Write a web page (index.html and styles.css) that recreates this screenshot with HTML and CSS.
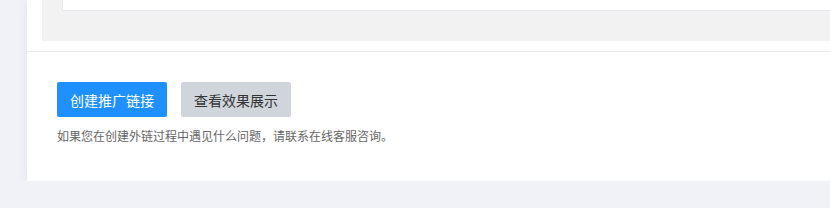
FILE: index.html
```html
<!DOCTYPE html>
<html lang="zh-CN">
  <head>
    <meta charset="UTF-8" />
    <meta name="viewport" content="width=device-width, initial-scale=1.0" />
    <title>创建推广链接</title>
    <link rel="stylesheet" href="styles.css">
  </head>
  <body>
    <div class="card">
      <div class="preview">
        <div class="previewInner"></div>
      </div>
      <div class="footer">
        <div class="actions">
          <button class="btn btnPrimary">创建推广链接</button>
          <button class="btn btnGray">查看效果展示</button>
        </div>
        <p class="tip">如果您在创建外链过程中遇见什么问题，请联系在线客服咨询。</p>
      </div>
    </div>
  </body>
</html>
```

FILE: styles.css
```css
body {
  margin: 0;
  background-color: #f0f2f7;
  font-family: "Noto Sans CJK SC", "Liberation Sans", sans-serif;
  overflow: hidden;
}
.card {
  margin-left: 27px;
  width: 820px;
  height: 181px;
  background-color: #fff;
  box-shadow: 0 2px 12px rgba(0, 0, 0, 0.06);
}
.preview {
  margin-left: 15px;
  height: 41px;
  background-color: #f2f2f2;
  padding-left: 20px;
}
.previewInner {
  height: 10px;
  background-color: #fff;
  border: 1px solid #e4e6ec;
  border-top: none;
  border-right: none;
  border-bottom-left-radius: 2px;
}
.footer {
  margin-top: 10px;
  border-top: 1px solid #e8e9ec;
  padding: 30px 30px 0;
}
.actions {
  display: flex;
  gap: 14px;
}
.btn {
  width: 110px;
  height: 35px;
  border: none;
  border-radius: 2px;
  font-family: inherit;
  font-size: 14px;
  padding: 0;
  cursor: pointer;
}
.btnPrimary {
  background-color: #1e90ff;
  color: #fff;
}
.btnGray {
  background-color: #d0d5dc;
  color: #333;
}
.tip {
  margin: 10px 0 0;
  font-size: 12px;
  color: #666;
}
```
